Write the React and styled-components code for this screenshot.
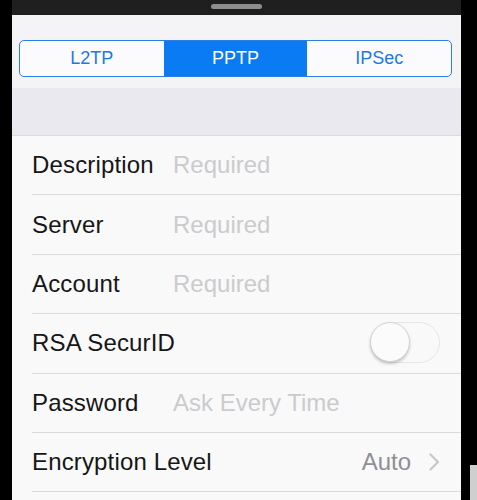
import React, { useState } from "react";
import styled, { createGlobalStyle } from "styled-components";

const Global = createGlobalStyle`
  html, body { margin: 0; padding: 0; background: #000; }
  body { width: 477px; height: 500px; overflow: hidden; font-family: "Liberation Sans", Arial, sans-serif; }
`;

const Frame = styled.div`
  display: flex;
  width: 477px;
  height: 500px;
  background: #000;
`;

const LeftBezel = styled.div`
  width: 12px;
  background: #000;
`;

const RightBezel = styled.div`
  width: 16px;
  display: flex;
  flex-direction: column;
  justify-content: flex-end;
  align-items: flex-end;
  background: #000;
`;

const BezelPatch = styled.div`
  width: 7px;
  height: 35px;
  background: #cfcfcf;
`;

const Screen = styled.div`
  flex: 1;
  display: flex;
  flex-direction: column;
  overflow: hidden;
  background: #f9f9f9;
`;

const TopBar = styled.div`
  height: 15px;
  background: #1f1f1f;
  display: flex;
  justify-content: center;
  align-items: flex-start;
`;

const Grabber = styled.div`
  margin-top: 4px;
  width: 51px;
  height: 5px;
  border-radius: 3px;
  background: #8d8d8d;
`;

const Toolbar = styled.div`
  background: #f4f4f6;
  padding: 25px 9px 11px 7px;
`;

const Segmented = styled.div`
  display: grid;
  grid-template-columns: 1fr 1fr 1fr;
  height: 37px;
  box-sizing: border-box;
  border: 1.5px solid #2a7ee6;
  border-radius: 5px;
  overflow: hidden;
  background: #fbfbfd;
`;

const Segment = styled.div`
  display: flex;
  align-items: center;
  justify-content: center;
  font-size: 18px;
  color: ${(p) => (p.$active ? "#ffffff" : "#1e78e6")};
  background: ${(p) => (p.$active ? "#0a7bf2" : "transparent")};
  padding-bottom: 1px;
`;

const GroupGap = styled.div`
  height: 47px;
  background: #e9e9ef;
  border-bottom: 1px solid #d9d9de;
`;

const List = styled.div`
  display: flex;
  flex-direction: column;
  background: #f9f9f9;
`;

const Row = styled.div`
  height: 59.4px;
  box-sizing: border-box;
  margin-left: 20px;
  padding-right: 20px;
  border-bottom: 1px solid #dadada;
  display: flex;
  align-items: center;
`;

const Label = styled.div`
  width: 141px;
  flex-shrink: 0;
  font-size: 24px;
  letter-spacing: 0.15px;
  color: #161616;
  white-space: nowrap;
`;

const Placeholder = styled.div`
  flex: 1;
  font-size: 24px;
  color: #cbcbcd;
  white-space: nowrap;
`;

const Spacer = styled.div`
  flex: 1;
`;

const Value = styled.div`
  font-size: 24px;
  color: #8f8f94;
  margin-right: 18px;
`;

const Chevron = styled.svg`
  width: 11px;
  height: 18px;
  margin-right: 1px;
`;

const Toggle = styled.div`
  width: 70px;
  height: 41px;
  box-sizing: border-box;
  border: 1.5px solid #e6e6e6;
  border-radius: 21px;
  background: #f9f9f9;
  display: flex;
  align-items: center;
  margin-right: 1px;
  margin-bottom: 2px;
`;

const Knob = styled.div`
  width: 40px;
  height: 40px;
  box-sizing: border-box;
  border-radius: 50%;
  background: #fbfbfb;
  border: 1px solid #d4d4d4;
  box-shadow: 0 2px 3px rgba(0, 0, 0, 0.2);
  margin-left: -1px;
`;

export default function App() {
  const [active, setActive] = useState("PPTP");
  const tabs = ["L2TP", "PPTP", "IPSec"];
  return (
    <>
      <Global />
      <Frame>
        <LeftBezel />
        <Screen>
          <TopBar>
            <Grabber />
          </TopBar>
          <Toolbar>
            <Segmented>
              {tabs.map((t) => (
                <Segment key={t} $active={t === active} onClick={() => setActive(t)}>
                  {t}
                </Segment>
              ))}
            </Segmented>
          </Toolbar>
          <GroupGap />
          <List>
            <Row>
              <Label>Description</Label>
              <Placeholder>Required</Placeholder>
            </Row>
            <Row>
              <Label>Server</Label>
              <Placeholder>Required</Placeholder>
            </Row>
            <Row>
              <Label>Account</Label>
              <Placeholder>Required</Placeholder>
            </Row>
            <Row>
              <Label>RSA SecurID</Label>
              <Spacer />
              <Toggle>
                <Knob />
              </Toggle>
            </Row>
            <Row>
              <Label>Password</Label>
              <Placeholder>Ask Every Time</Placeholder>
            </Row>
            <Row>
              <Label>Encryption Level</Label>
              <Spacer />
              <Value>Auto</Value>
              <Chevron viewBox="0 0 11 18">
                <path d="M1.5 1.5 L9 9 L1.5 16.5" fill="none" stroke="#c7c7cc" strokeWidth="2.2" strokeLinecap="round" strokeLinejoin="round" />
              </Chevron>
            </Row>
          </List>
        </Screen>
        <RightBezel>
          <BezelPatch />
        </RightBezel>
      </Frame>
    </>
  );
}
